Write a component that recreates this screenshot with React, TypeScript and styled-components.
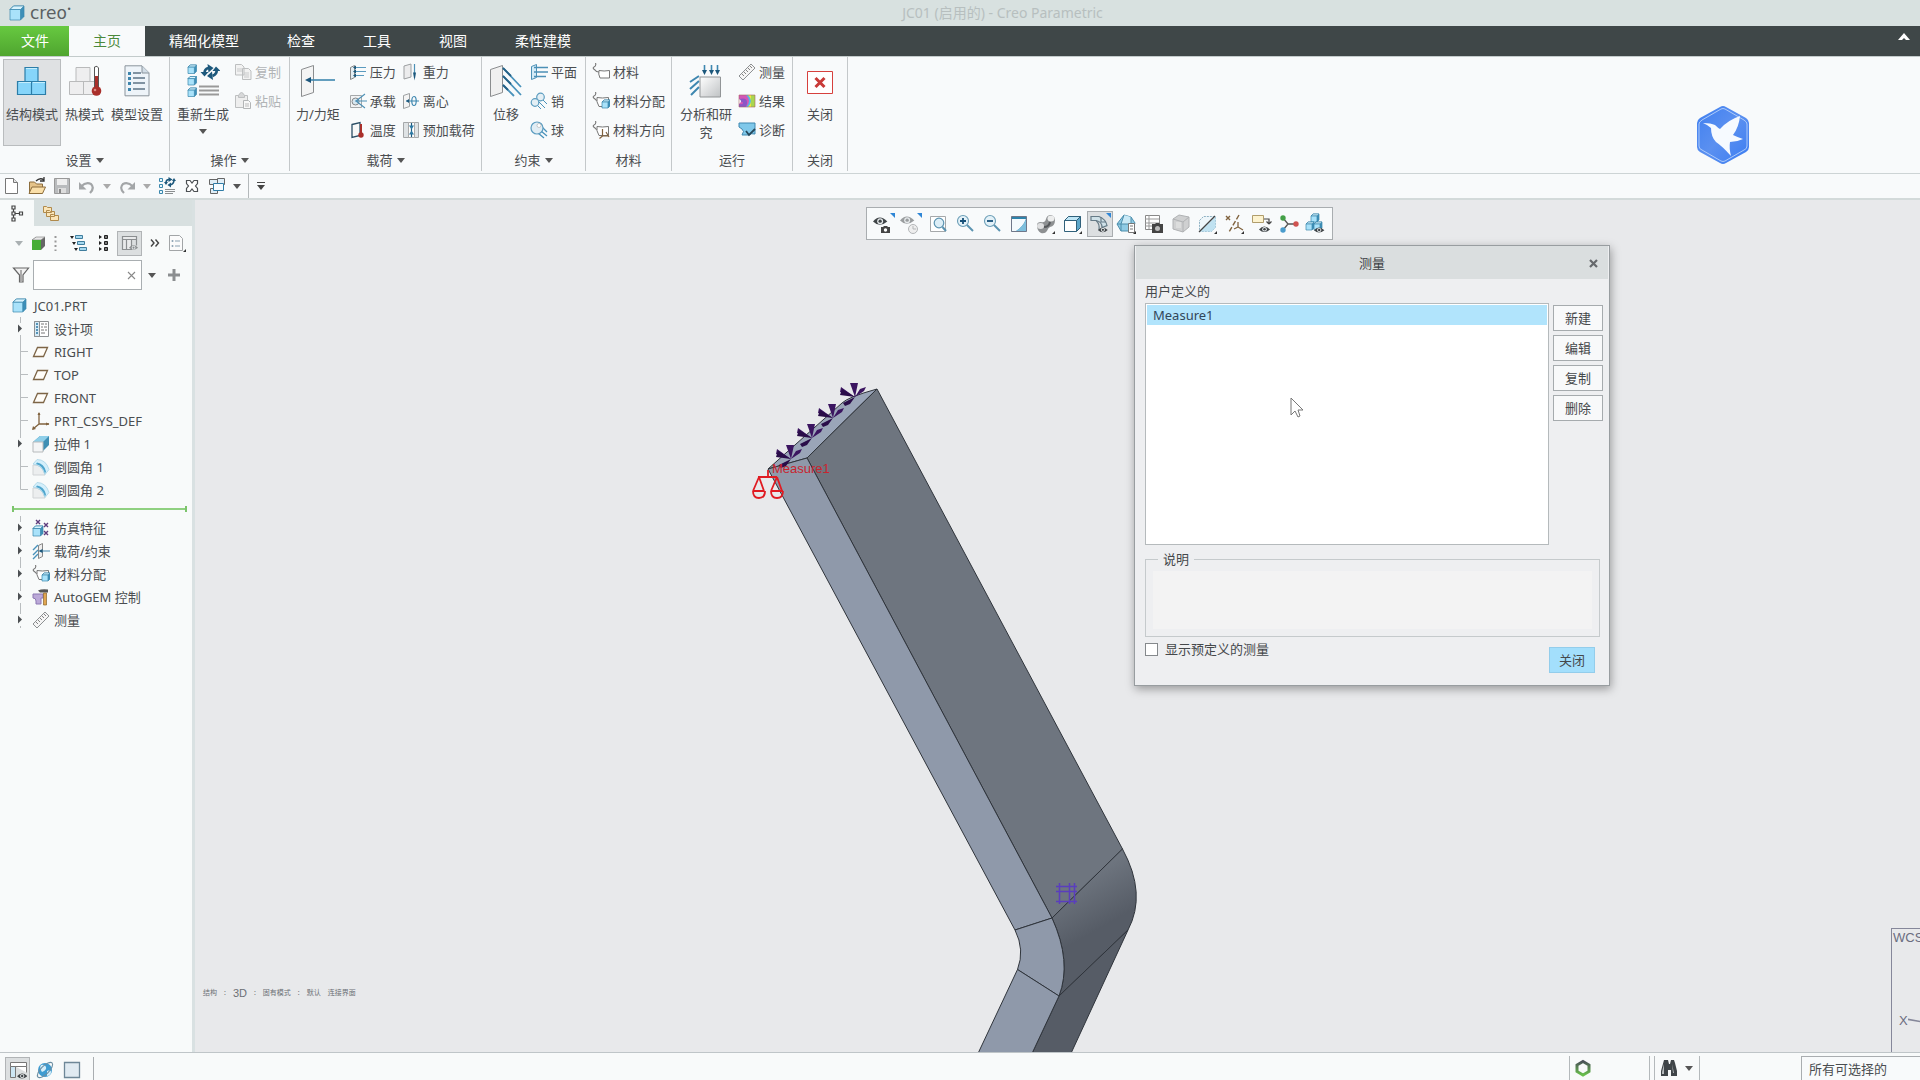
import React from 'react';
import styled, { createGlobalStyle } from 'styled-components';

const GlobalStyle = createGlobalStyle`
  *, *::before, *::after { box-sizing: border-box; }
  body {
    margin: 0;
    background: #f8fafb;
    color: #4a4d50;
    font: 13px/18px "Noto Sans", "Noto Sans CJK SC", sans-serif;
  }
  button, input, select, textarea { font: inherit; color: inherit; }
  button { background: none; border: 0; padding: 0; white-space: nowrap; }
  svg { display: block; flex: none; }
`;

/* ---------- icons ---------- */

type IconProps = { w?: number; h?: number; box?: string; children: React.ReactNode };
const Svg = ({ w = 18, h = w, box, children }: IconProps) => (
  <svg width={w} height={h} viewBox={box ?? `0 0 ${w} ${h}`} fill="none" aria-hidden="true">{children}</svg>
);

const Caret = ({ color = '#555' }: { color?: string }) => (
  <Svg w={8} h={5}><path d="M0 0h8L4 5z" fill={color} /></Svg>
);

const cube = (x: number, y: number, s: number, front = '#a9e2fa', side = '#3d8fb8') => (
  <g key={`${x}-${y}`} stroke="#3a87ac" strokeWidth=".7">
    <path d={`M${x} ${y + s * 0.25}l${s * 0.25} ${-s * 0.25}h${s * 0.75}v${s * 0.75}l${-s * 0.25} ${s * 0.25}z`} fill={side} />
    <path d={`M${x} ${y + s * 0.25}l${s * 0.25} ${-s * 0.25}h${s * 0.75}l${-s * 0.25} ${s * 0.25}z`} fill="#d8f3fd" />
    <path d={`M${x} ${y + s * 0.25}h${s * 0.75}v${s * 0.75}h${-s * 0.75}z`} fill={front} />
  </g>
);

const eye = (x: number, y: number, k = 1, c = '#3f4447') => (
  <g transform={`translate(${x} ${y}) scale(${k})`}>
    <path d="M0 4Q6-3 13 4Q6 10 0 4z" fill={c} />
    <circle cx="6.5" cy="3.8" r="2.7" fill="#e6eaec" />
    <circle cx="6.5" cy="3.8" r="1.5" fill={c} />
  </g>
);

const corner = <path d="M20 18v3h-3z" fill="#333" />;
const blueFlag = <path d="M17 0h5v5z" fill="#2f86d6" />;
const hook = <path d="M3.500 0q1 3-1.500 4-2 1 1 3 1 2 4 2" stroke="#777" strokeWidth="1.100" />;

const art = {
  structure: <Svg w={32}><g fill="#86d5fa" stroke="#2c7da8" strokeWidth="1.2"><path d="M9 2.500h13v14H9zM1.500 16.500h14v13h-14zM15.500 16.500h14v13h-14z" /></g><path d="M10 3.500h11M3 17.500h12M17 17.500h12" stroke="#c5eefd" /></Svg>,
  thermal: <Svg w={34} h={32}><g fill="#eeeeef" stroke="#b9babb"><path d="M8 2.500h14v14H8zM1.500 16.500h14v13h-14zM15.500 16.500h12v13h-12z" /></g><path d="M26.500 2q3-2 4 1v20h-4z" fill="#fff" stroke="#555" /><path d="M27 11h3v13h-3z" fill="#a92f2a" /><circle cx="28.500" cy="26" r="4.800" fill="#a92f2a" /><circle cx="27" cy="25" r="1.300" fill="#dd8a84" /></Svg>,
  model: <Svg w={28} h={32}><path d="M2 .8h17l7 7v23H2z" fill="#eef4f9" stroke="#8a949c" /><path d="M19 1v7h7" fill="#d2dde6" stroke="#8a949c" /><path d="M10 8h8M10 13h12M10 18h12M10 24h12" stroke="#5d7385" strokeWidth="1.400" /><path d="M5 7h3v3H5zM5 12h3v3H5zM5 17h3v3H5zM5 23h3v3H5z" fill="#4086ad" /></Svg>,
  regen: <Svg w={34} h={34}>{cube(2, 1, 8.5)}{cube(2, 12.5, 8.5)}{cube(2, 24, 8.5)}<g fill="none" stroke="#1d587c" strokeWidth="2.600"><path d="M18.500 9q0-4 4-5" /><path d="M30.500 5q1 5-4 7" /></g><path d="M21.500 0l6 4-5 4.500zM27 16l-6-4 5-4.500zM14.500 8h8l-4 4.500zM26.500 7h8l-4.500-4.500z" fill="#1d587c" /><path d="M13 22.500h20M13 26.500h20M13 30.500h20" stroke="#999" strokeWidth="1.800" /></Svg>,
  copy: <Svg><g fill="#f2f2f2" stroke="#bdbfc0"><path d="M1.500 1.500h6l2.500 2.500v8H1.500zM8.500 5.500h6L17 8v8.500H8.500z" /></g><path d="M3 6h5M3 8h5M10 10h5M10 12h5M10 14h5" stroke="#c9cacb" /></Svg>,
  paste: <Svg><path d="M1.500 3.500h12v12h-12z" fill="#eee" stroke="#bdbfc0" /><path d="M4.500 3.500q3-6 6 0v2h-6z" fill="#d7d8d9" stroke="#bdbfc0" /><path d="M9.500 8.500h5l2 2v6h-7z" fill="#f8f8f8" stroke="#b3b5b6" /><path d="M11 12h4M11 14h4" stroke="#bbb" /></Svg>,
  force: <Svg w={36} h={34}><path d="M1.500 5.500l12-4v27l-12 4z" fill="#f4f4f4" stroke="#8b8d8f" /><path d="M7 16h28" stroke="#3e87b0" strokeWidth="1.600" /><path d="M5 16l6-3v6z" fill="#1c567c" /></Svg>,
  pressure: <Svg><path d="M1.500 4.500l4-2v12l-4 2z" fill="#e4eef4" stroke="#888" /><path d="M5 4.500h12M5 8.500h12M5 12.500h10" stroke="#5a9abf" strokeWidth="1.100" /><path d="M4 4.500l3-2v4zM4 8.500l3-2v4zM4 12.500l3-2v4z" fill="#1d587c" /></Svg>,
  bearing: <Svg><path d="M1.500 3.500h11v12h-11z" fill="#f2f3f4" stroke="#a5a8aa" /><circle cx="6.500" cy="9.500" r="3.500" fill="#d7e7f0" stroke="#888" /><path d="M16 2L7 9l9 7M6 9h12" stroke="#4c90b6" strokeWidth="1.100" /></Svg>,
  temperature: <Svg><path d="M3 3.500l8-2v13l-8 2z" fill="#f7f8f8" stroke="#2b4e65" strokeWidth="1.300" /><path d="M11 3h2v10h-2z" fill="#a92f2a" /><circle cx="12" cy="14" r="2.700" fill="#a92f2a" /></Svg>,
  gravity: <Svg><path d="M2 3l7-2v13l-7 2z" fill="#ececed" stroke="#9da0a2" /><path d="M12.500 1v14" stroke="#4c90b6" strokeWidth="1.200" /><path d="M12.500 17.500l-1.500-8h3z" fill="#1d587c" /></Svg>,
  centrifugal: <Svg><path d="M1.500 3.500l6-2v13l-6 2z" fill="#f4f4f4" stroke="#9da0a2" /><path d="M4 9h13" stroke="#4c90b6" strokeWidth="1.100" /><ellipse cx="12" cy="9" rx="2.200" ry="4.500" stroke="#3e87b0" strokeWidth="1.200" /><path d="M4 9l3-2v4z" fill="#1d587c" /></Svg>,
  preload: <Svg><path d="M1.500 1.500h15v15h-15z" fill="#dfe3e5" stroke="#a5a8aa" /><path d="M6.500 1.500h6v15h-6z" fill="#fff" stroke="#aaa" /><path d="M9.500 2v14" stroke="#1d587c" strokeWidth="1.200" /><path d="M7 4.500h5l-2.500 4zM7 13.500h5l-2.500-4z" fill="#2c78a3" /></Svg>,
  displacement: <Svg w={34} h={34}><path d="M1.500 5.500l12-4v27l-12 4z" fill="#f0f0f0" stroke="#8b8d8f" /><path d="M14 4l18 19M14 12l18 19M14 21l11 11" stroke="#4992bb" strokeWidth="1.800" /><path d="M14 4l8 8M14 12l8 8M14 21l5 5" stroke="#256186" strokeWidth="1.800" /></Svg>,
  planar: <Svg><path d="M1.500 3.500l5-2v13l-5 2z" fill="#d4ebf7" stroke="#4c90b6" /><path d="M4 4.500h14M4 9h14M4 13.500h12" stroke="#4c90b6" strokeWidth="1.300" /></Svg>,
  pin: <Svg><path d="M9 10l6 6M12 7l5 5M6 12l5 5" stroke="#4992bb" /><circle cx="10.500" cy="5" r="3.800" fill="#e4eff5" stroke="#5d9dc0" strokeWidth="1.200" /><circle cx="5" cy="10.500" r="3.800" fill="#e4eff5" stroke="#5d9dc0" strokeWidth="1.200" /></Svg>,
  ball: <Svg><path d="M8 12l6 5M11 10l6 5M12 6l5 5" stroke="#4992bb" strokeWidth="1.300" /><circle cx="7" cy="7" r="6" fill="#e1edf4" stroke="#5d9dc0" strokeWidth="1.200" /><circle cx="9" cy="4.500" r="2" fill="#fff" stroke="#aaa" strokeWidth=".6" /></Svg>,
  material: <Svg>{hook}<path d="M7 7.500q5 1 10.500 0v7.500H8q-2-4-1-7.500z" fill="#fff" stroke="#777" /></Svg>,
  assign: <Svg>{hook}<path d="M5 5.500q5 1 11.500 0v9H7q-3-5-2-9z" fill="#fff" stroke="#777" />{cube(10, 8, 8)}</Svg>,
  orient: <Svg>{hook}<path d="M5 5.500q5 1 11.500 0v9H7q-3-5-2-9z" fill="#fff" stroke="#777" /><path d="M10.500 8v7h6M10.500 15l-3 2.500M14 11l3 5" stroke="#80613d" strokeWidth="1.200" /></Svg>,
  analysis: <Svg w={34} h={34}><g stroke="#3e87b0" strokeWidth="1.600"><path d="M15.500 1v6M22.500 1v6M28.500 1v6" /><path d="M1 18l9-6M1 25l9-8M2 31l8-8" strokeWidth="2" /></g><path d="M13 6h5l-2.500 5zM20 6h5l-2.500 5zM26 6h5l-2.500 5z" fill="#1d587c" /><path d="M11 13h20.500v20H11z" fill="url(#steel)" stroke="#929597" /><defs><linearGradient id="steel" x1="0" y1="0" x2="1" y2="1"><stop stopColor="#fff" /><stop offset="1" stopColor="#bfc2c4" /></linearGradient></defs></Svg>,
  measure: <Svg><path d="M1 13L13 1l4 4L5 17z" fill="#f5f5f5" stroke="#8d9092" /><path d="M4 11l2 2M6 9l2 2M8 7l2 2M10 5l2 2M12 3l2 2" stroke="#777" strokeWidth=".9" /></Svg>,
  result: <Svg><path d="M1 3h16v12H1z" fill="#f3e73a" /><path d="M13 3h4v12h-4z" fill="#a9d64f" /><path d="M1 3h9q6 6 0 12H1z" fill="#54b9e6" /><path d="M1 3h7q6 6 0 12H1z" fill="#d356b6" /><path d="M1 7q8-2 8 3t-2 5H1v-3q4 1 4-1T1 10z" fill="#8b55c6" /><path d="M1 7q4 2 0 5z" fill="#fff" /><path d="M1 3h16v12H1z" stroke="#a66" strokeWidth=".6" /></Svg>,
  diagnose: <Svg><path d="M1 2h16v11q-4-1-6 1H4q3-4 0-6L1 6z" fill="#7fc8ea" stroke="#3e87b0" /><path d="M8 10l3 4 6-6" stroke="#27485b" strokeWidth="1.800" /></Svg>,
  exit: <Svg w={28} h={34}><path d="M1.500 7.500h25v22h-25z" fill="#fff" stroke="#d6403d" /><path d="M9.500 14l9 9M18.500 14l-9 9" stroke="#c93a38" strokeWidth="3" /></Svg>,

  newFile: <Svg><path d="M2.500 1.500h8l4 4v11h-12z" fill="#fff" stroke="#777" /><path d="M10.500 1.500v4h4" stroke="#777" fill="#e5e5e5" /></Svg>,
  open: <Svg><path d="M1.500 5h5l2 2h6v9H1.500z" fill="#e5c389" stroke="#8c6d3c" /><path d="M4 10h13.500l-3 6.500H1z" fill="#fadfa9" stroke="#8c6d3c" /><path d="M8 4q4-4 8-1M16 0v4h-4" stroke="#333" strokeWidth="1.300" /></Svg>,
  save: <Svg><path d="M1.500 1.500h15v15h-15z" fill="#b9bbbd" stroke="#999" /><path d="M4 2h10v6H4z" fill="#eee" /><path d="M5 11h8v5H5z" fill="#ddd" /><path d="M6 12h2v4H6z" fill="#888" /></Svg>,
  undo: <Svg><path d="M3 9.500q5-5 10-2.500 4 4-1 9" stroke="#a3a6a8" strokeWidth="2.200" /><path d="M1 5v7.500h7.500z" fill="#a3a6a8" /></Svg>,
  redo: <Svg><path d="M15 9.500q-5-5-10-2.500-4 4 1 9" stroke="#a3a6a8" strokeWidth="2.200" /><path d="M17 5v7.500H9.500z" fill="#a3a6a8" /></Svg>,
  regenSmall: <Svg><g stroke="#3a87ac" fill="#e9f6fc"><path d="M1.500 1.500h3v3h-3zM1.500 7.500h3v3h-3zM1.500 13.500h3v3h-3z" /></g><path d="M8 6q0-3.500 3-3.500M16 3q0 4-4 5" stroke="#1d587c" strokeWidth="1.600" /><path d="M10.500 0l4 2.500-4 2.500zM13 10.500L9.500 8 13 5.500zM6 5h4L8 8zM14 4h4l-2-3z" fill="#1d587c" /><path d="M7 12.500h10M7 14.500h10M7 16.500h8" stroke="#8b8e90" /></Svg>,
  closeWin: <Svg><path d="M3.500 3.500h3.500L9 6l2-2.500h3.500v3L12.500 9l2 2.500v3H11L9 12l-2 2.500H3.500v-3L5.500 9l-2-2.500z" fill="#fff" stroke="#4c5053" strokeWidth="1.200" /></Svg>,
  windows: <Svg><g stroke="#666" fill="#dfeef7"><path d="M1.500 2.500h8v5h-8zM9.500 1.500h7v6h-7zM2.500 11.500h7v5h-7z" /><path d="M5.500 6.500h10v7h-10z" stroke="#2f7ca6" fill="#f4fbff" /></g></Svg>,

  treeTab: <Svg w={14} h={18}><g stroke="#444" strokeWidth="1.200"><path d="M2 2h3v3H2zM2 8h3v3H2zM2 14h3v3H2zM9.500 8h3v3h-3z" /><path d="M5 9.500h4M3.500 5v3M3.500 11v3" /></g></Svg>,
  folders: <Svg><g fill="#fbe5b8" stroke="#b08a4c"><path d="M1.500 2.500h3l1 1h4v5h-8zM4.500 6.500h3l1 1h4v5h-8zM8.500 10.500h3l1 1h4v5h-8z" /></g></Svg>,
  greenCube: <Svg w={15} h={15}><path d="M1 4l4-3h9v9l-4 4z" fill="#666" /><path d="M1 4l4-3h9l-4 3z" fill="#e8e8e8" stroke="#777" strokeWidth=".6" /><path d="M1 4h9v10H1z" fill="#46ad35" /></Svg>,
  dots: <Svg w={3} h={16}><path d="M1.500 1v15" stroke="#999" strokeWidth="2" strokeDasharray="2 2.500" /></Svg>,
  collapse: <Svg><g fill="#a5d8ef" stroke="#3f7d9d"><path d="M6.500 1.500h7v3h-7zM8.500 7.500h7v3h-7zM10.500 13.500h7v3h-7z" /></g><path d="M1 2h4L3 5zM3 8h4l-2 3zM5 14h4l-2 3z" fill="#222" /></Svg>,
  expand: <Svg w={11} h={18}><g fill="#777" stroke="#222"><path d="M6.500 1.500h3v3h-3zM6.500 7.500h3v3h-3zM6.500 13.500h3v3h-3z" /></g><path d="M1 1l3 2-3 2zM1 7l3 2-3 2zM1 13l3 2-3 2z" fill="#222" /></Svg>,
  columns: <Svg><path d="M1.500 2.500h14v3h-14zM1.500 5.500h4v10h-4zM5.500 5.500h5v10h-5zM15.500 5.500v6" stroke="#8b8e90" strokeWidth="1.200" fill="#e9eaeb" />{eye(8, 11, 0.7, '#8b8e90')}</Svg>,
  chevrons: <Svg w={10} h={10}><path d="M1 1.500L4 5 1 8.500M5.500 1.500l3 3.500-3 3.500" stroke="#444" strokeWidth="1.400" /></Svg>,
  docMenu: <Svg><path d="M1.500 1.500h10l3 3v12h-13z" fill="#fbfbfb" stroke="#a2a5a7" /><path d="M7 7h5M7 12h5" stroke="#8aa1b1" /><circle cx="4.500" cy="7" r="1" fill="#8aa1b1" /><circle cx="4.500" cy="12" r="1" fill="#8aa1b1" /><path d="M18 15v3h-3z" fill="#333" /></Svg>,
  funnel: <Svg><path d="M1.500 2h15L11 9v7H7.500V9z" fill="#f2f2f2" stroke="#666" strokeWidth="1.200" /><path d="M9 4v11" stroke="#666" /></Svg>,
  clear: <Svg w={9} h={9}><path d="M1 1l7 7M8 1L1 8" stroke="#888" strokeWidth="1.100" /></Svg>,
  plus: <Svg w={12} h={12}><path d="M6 0v12M0 6h12" stroke="#8b8e90" strokeWidth="3" /></Svg>,

  part: <Svg w={15} h={15}>{cube(1, 1, 13)}</Svg>,
  design: <Svg><path d="M2.500 1.500h14v15h-14z" fill="#fff" stroke="#8d9092" /><path d="M2.500 1.500h5v15h-5z" fill="#d6eaf5" stroke="#8d9092" /><path d="M9 4h3M13 4h2M9 7h2M12 7h3M9 10h3M13 10h2M9 13h4" stroke="#777" /><path d="M4 4h2M4 7h2M4 10h2M4 13h2" stroke="#2c78a3" strokeWidth="1.500" /></Svg>,
  plane: <Svg><path d="M1.500 13.500l4-9h10l-4 9z" fill="#fffdf8" stroke="#7d6546" strokeWidth="1.300" /></Svg>,
  csys: <Svg><path d="M7 1v11h10M7 12l-6 5" stroke="#80633f" strokeWidth="1.300" /><path d="M5.500 3L7 0l1.500 3zM14 10.500l3.500 1.500-3.500 1.500zM1 14l-1 4 4-1z" fill="#80633f" /></Svg>,
  extrude: <Svg><path d="M1 7l7-6h9v9l-6 6z" fill="#3f8fb4" /><path d="M1 7l7-6h9l-6 6z" fill="#8fcfe9" /><path d="M1 7h10v10H1z" fill="#f4f5f6" stroke="#b7babc" /></Svg>,
  round: <Svg><path d="M1 7q9-1 12 10H1z" fill="#eceeef" stroke="#d0d3d5" /><path d="M5 1.500q9 0 12 10l-4 5Q10 7 1 6z" fill="#d3effb" stroke="#a8d3e6" strokeWidth=".8" /><path d="M5 4.500q7 1 9 9l-1 2Q11 8 4 6z" fill="#4ea5cd" /></Svg>,
  simFeature: <Svg>{cube(1, 7, 10)}<path d="M4 1l4 4M8 1L4 5M12 4l4 4M16 4l-4 4M12 12l4 4M16 12l-4 4" stroke="#5e3c7c" strokeWidth="1.400" /></Svg>,
  loadConstraint: <Svg><path d="M6.500 3.500l4-2v13l-4 2z" fill="#eee" stroke="#888" /><path d="M1 8l5-5M1 13l5-5M1 17l5-5" stroke="#4992bb" strokeWidth="1.400" /><path d="M8 9h10" stroke="#3e87b0" /><path d="M6.500 9l4-2v4z" fill="#1d587c" /></Svg>,
  autogem: <Svg><path d="M1 6h10v4H9v6H4v-3q0-3-3-3z" fill="#bba9d8" stroke="#8d78b3" /><path d="M6 2.500q4-2 10-1v3H8z" fill="#555" /><path d="M11.500 5h3v12h-3z" fill="#e0a651" stroke="#8c6429" strokeWidth=".7" /></Svg>,

  eyeCam: <Svg w={22}>{eye(0, 4, 1.1)}<path d="M8 14h2l1-1h3l1 1h2v6H8z" fill="#444" /><circle cx="12.500" cy="17" r="1.700" fill="#fff" />{blueFlag}</Svg>,
  eyeOff: <Svg w={22}>{eye(0, 3, 1.1, '#9a9d9f')}<circle cx="13" cy="16" r="4.500" fill="#eee" stroke="#b3b6b8" /><path d="M13 13v3h3" stroke="#b3b6b8" />{blueFlag}</Svg>,
  refit: <Svg w={22}><path d="M3.500 3.500h15v15h-15z" fill="#fff" stroke="#a5a8aa" /><circle cx="12" cy="10" r="4.800" fill="#dceef7" stroke="#5b93b0" strokeWidth="1.200" /><path d="M15.500 14l3.500 4" stroke="#5b93b0" strokeWidth="2" /></Svg>,
  zoomIn: <Svg w={22}><circle cx="9" cy="8" r="5.500" fill="#e3f1f8" stroke="#6a9db6" strokeWidth="1.100" /><path d="M6 8h6M9 5v6" stroke="#164f78" strokeWidth="1.800" /><path d="M13 12l6 6" stroke="#5b93b0" strokeWidth="2" /></Svg>,
  zoomOut: <Svg w={22}><circle cx="9" cy="8" r="5.500" fill="#e3f1f8" stroke="#6a9db6" strokeWidth="1.100" /><path d="M6 8h6" stroke="#164f78" strokeWidth="1.800" /><path d="M13 12l6 6" stroke="#5b93b0" strokeWidth="2" /></Svg>,
  repaint: <Svg w={22}><path d="M3.500 3.500h15v15h-15z" fill="#2f83ab" stroke="#667" strokeWidth=".8" /><path d="M4 6h14q-3 8-10 12H4z" fill="#f4fafd" /><path d="M18 6v12H8q7-4 10-12z" fill="#7dbfdd" /></Svg>,
  shading: <Svg w={22}><path d="M2 12q0-3 4-3 4 1 5-3 1-4 5-4 4 1 4 5 0 6-5 7-2 1-3 4-2 3-6 2-4-2-4-8z" fill="#8d9092" /><ellipse cx="16" cy="5.500" rx="3.500" ry="3" fill="#eceded" /><ellipse cx="5.500" cy="13" rx="3.500" ry="3" fill="#dedfe0" /><path d="M9 14q5 0 6-5" stroke="#55585b" strokeWidth="2" />{corner}</Svg>,
  display: <Svg w={22}><path d="M2.500 7.500l4-4h12v11l-4 4z" fill="#5da7ca" stroke="#30617b" /><path d="M2.500 7.500l4-4h12l-4 4z" fill="#bfe6f6" stroke="#30617b" /><path d="M2.500 7.500h12v11h-12z" fill="#fff" stroke="#30617b" />{corner}</Svg>,
  annotation: <Svg w={22}><path d="M2 3.500h8q7 3 8 9l-5 2q0-6-6-7H2z" fill="#cfe1e8" stroke="#667b87" strokeWidth="1.200" /><path d="M7 7.500q4 3 3 10M12 4v5l5 0" stroke="#667b87" strokeWidth="1.200" />{eye(9, 14, 0.75)}{blueFlag}</Svg>,
  views: <Svg w={22}><path d="M8 2l7 2 4 6-3 8H5l-4-7z" fill="#8fcbe5" stroke="#4d8eac" /><path d="M8 2L5 11h10l0-7M5 11H1M5 11v7" stroke="#4d8eac" fill="#c9e9f6" /><path d="M12.500 10.500h6v9h-6z" fill="#fff" stroke="#777" /><path d="M14 13h3M14 16h3" stroke="#777" />{corner}</Svg>,
  viewMgr: <Svg w={22}><path d="M2.500 2.500h14v14h-14z" fill="#fff" stroke="#888" /><path d="M2 6h14M2 10h14M2 13h14M6 2v14" stroke="#999" /><path d="M9 11h3l1-1h3l1 1h3v9H9z" fill="#444" /><circle cx="14.500" cy="15.500" r="2.500" fill="#bbb" /></Svg>,
  grayCube: <Svg w={22}><path d="M3 6l6-4 10 2v10l-6 5-10-3z" fill="#cfd0d1" stroke="#b0b2b4" /><path d="M3 6l10 3 6-5M13 9v10" stroke="#b0b2b4" /><path d="M6 9h5v6H6z" fill="#dcdddd" /></Svg>,
  section: <Svg w={22}><path d="M2.500 7.500l4-4h12v11l-4 4h-12z" fill="#eef6fa" stroke="#8fb2c4" strokeDasharray="2 1" /><path d="M2.500 18.500l12-11 4-4v11l-4 4z" fill="#c0e2f1" /><path d="M2 19L18 3" stroke="#444" strokeWidth="1.300" />{corner}</Svg>,
  datums: <Svg w={22}><path d="M2 3l4 4M6 3L2 7" stroke="#80633f" strokeWidth="1.400" /><path d="M15 2L5 19" stroke="#80633f" strokeWidth="1.400" strokeDasharray="5 2" /><path d="M14 9v5l5 3M14 14l-4 2" stroke="#80633f" strokeWidth="1.300" />{corner}</Svg>,
  notes: <Svg w={22}><path d="M1.500 2.500h11v7h-11z" fill="#fdf3cf" stroke="#b09d6c" /><path d="M13 6h5v5M18 11l-2.500-2.500M18 11l2.500-2.500" stroke="#444" strokeWidth="1.200" />{eye(8, 13, 0.85)}</Svg>,
  spin: <Svg w={22}><path d="M5 5l5 6M10 11h8M10 11l-5 6" stroke="#555" strokeWidth="1.300" /><circle cx="5" cy="5" r="2.700" fill="#43a047" /><circle cx="18" cy="11" r="2.700" fill="#cf5350" /><circle cx="5" cy="17" r="2.700" fill="#4a9ccc" /></Svg>,
  simDisplay: <Svg w={22}>{cube(6, 1, 8)}{cube(1, 9, 8)}{cube(9, 9, 8)}{eye(9, 14, 0.8)}</Svg>,

  panel: <Svg><path d="M1.500 1.500h16v4h-16z" fill="#fff" stroke="#777" /><path d="M1.500 5.500h5v11h-5z" fill="#cde6f3" stroke="#777" /><path d="M6.500 5.500h11v6" stroke="#777" fill="#fff" />{eye(8, 12, 0.8)}</Svg>,
  globe: <Svg><circle cx="9" cy="9" r="7" fill="#3f9cd1" /><path d="M5 4q4-1 5 2t-4 5q-3-4-1-7zM11 10q4-2 4 1t-4 4z" fill="#d5eefa" /><ellipse cx="9" cy="9" rx="10" ry="4" transform="rotate(-45 9 9)" stroke="#6d8ea2" strokeWidth="1.100" /></Svg>,
  blank: <Svg><path d="M1.500 1.500h15v15h-15z" fill="#e0eaf1" stroke="#6e8797" strokeWidth="1.300" /></Svg>,
  hexagon: <Svg w={16} h={18}><path d="M8 2.500l6 3.500v6.500L8 16l-6-3.500V6z" stroke="url(#hex)" strokeWidth="3" /><defs><linearGradient id="hex" x1="0" y1="0" x2="0" y2="1"><stop stopColor="#4b5358" /><stop offset="1" stopColor="#69c04c" /></linearGradient></defs></Svg>,
  binoculars: <Svg><path d="M4 1h4l1 4h1l1-4h3l1 3 2 8v5h-6v-6H8v6H1v-5z" fill="#3f4447" /><path d="M4 5l-2 8v2h2zM12 5l1 9h1z" fill="#b5b9bb" /></Svg>,
};
type Art = keyof typeof art;

/* ---------- title and menu ---------- */

const Page = styled.div`
  height: 100vh;
  min-height: 720px;
  display: flex;
  flex-direction: column;
  overflow: hidden;
`;

const TitleBar = styled.header`
  display: flex;
  align-items: center;
  flex: none;
  height: 26px;
  padding-left: 9px;
  background: #d8e1e0;
`;

const Brand = styled.div`
  display: flex;
  align-items: center;
  gap: 5px;
  width: 76px;
  color: #5a6062;
  font: 17px/24px "DejaVu Sans", sans-serif;
  sup { font-size: 8px; line-height: 8px; }
`;

const WindowTitle = styled.h1`
  flex: 1;
  margin: 0;
  text-align: center;
  font-size: 14px;
  font-weight: 400;
  color: #b7bfbf;
`;

const MenuBar = styled.nav`
  display: flex;
  flex: none;
  height: 31px;
  background: #3f4748;
  border-bottom: 1px solid #c3cbcb;
`;

const MenuTab = styled.button<{ $kind?: 'file' | 'active' }>`
  padding: ${p => (p.$kind === 'file' ? '0 20px 0 21px' : '0 24px')};
  font-size: 14px;
  color: ${p => (p.$kind === 'active' ? '#4c8a3c' : '#fff')};
  background: ${p =>
    p.$kind === 'file' ? 'linear-gradient(#67c940, #4fa52f)' : p.$kind === 'active' ? '#f8fafb' : 'none'};
`;

const MinimizeRibbon = styled.button`
  align-self: flex-start;
  margin: 7px 10px 0 auto;
`;

/* ---------- ribbon ---------- */

const Ribbon = styled.section`
  display: flex;
  flex: none;
  align-items: stretch;
  height: 117px;
  padding-bottom: 2px;
  border-bottom: 1px solid #cdd4d5;
`;

const Group = styled.div<{ $width: number }>`
  display: flex;
  flex-direction: column;
  min-width: ${p => p.$width}px;
  border-right: 1px solid #c4c8ca;
`;

const GroupBody = styled.div<{ $gap?: number; $pad?: number; $center?: boolean }>`
  display: flex;
  justify-content: ${p => (p.$center ? 'center' : 'flex-start')};
  gap: ${p => p.$gap ?? 1}px;
  height: 89px;
  padding-left: ${p => p.$pad ?? 0}px;
`;

const GroupLabel = styled.button`
  display: flex;
  align-items: center;
  justify-content: center;
  gap: 4px;
  margin-top: 5px;
  height: 18px;
`;

const BigButton = styled.button<{ $on?: boolean; $wrap?: boolean }>`
  display: flex;
  flex-direction: column;
  align-items: center;
  min-width: 38px;
  max-width: ${p => (p.$wrap ? '60px' : 'none')};
  height: 87px;
  margin-top: 2px;
  padding: 4px 2px 0;
  border: 1px solid ${p => (p.$on ? '#b9bcbe' : 'transparent')};
  background: ${p => (p.$on ? '#dfe1e3' : 'none')};
  white-space: ${p => (p.$wrap ? 'normal' : 'nowrap')};
`;

const BigArt = styled.span`
  display: flex;
  align-items: center;
  height: 34px;
  margin-bottom: 7px;
`;

const CaretSlot = styled.span`
  margin-top: 6px;
`;

const SmallColumn = styled.div`
  display: grid;
  grid-template-rows: repeat(3, 29px);
  justify-items: start;
  height: 87px;
`;

const SmallButton = styled.button`
  display: flex;
  align-items: center;
  gap: 3px;
  &:disabled { color: #b1b4b6; }
`;

const Big = ({ icon, label, on, wrap, menu }: { icon: Art; label: string; on?: boolean; wrap?: boolean; menu?: boolean }) => (
  <BigButton $on={on} $wrap={wrap}>
    <BigArt>{art[icon]}</BigArt>
    {label}
    {menu && <CaretSlot><Caret /></CaretSlot>}
  </BigButton>
);

const Column = ({ items, disabled }: { items: [Art, string][]; disabled?: boolean }) => (
  <SmallColumn>
    {items.map(([icon, label]) => (
      <SmallButton key={label} disabled={disabled}>{art[icon]}{label}</SmallButton>
    ))}
  </SmallColumn>
);

const BirdBadge = styled.div`
  align-self: flex-end;
  margin: 0 170px 6px auto;
`;

const QuickBar = styled.div`
  display: flex;
  align-items: center;
  flex: none;
  gap: 7px;
  height: 26px;
  padding-left: 3px;
  border-bottom: 2px solid #d3dada;
`;

const Rule = styled.span`
  align-self: stretch;
  width: 1px;
  background: #b4b9bb;
`;

/* ---------- model tree ---------- */

const Workspace = styled.main`
  display: flex;
  flex: 1;
  min-height: 0;
`;

const Sidebar = styled.aside`
  flex: none;
  width: 195px;
  background: #f8fafa;
  border-right: 3px solid #d9e1e2;
`;

const SideTabs = styled.div`
  display: flex;
  height: 26px;
  background: #d8e0e0;
`;

const SideTab = styled.button<{ $on?: boolean }>`
  display: grid;
  place-items: center;
  width: 34px;
  background: ${p => (p.$on ? '#f8fafa' : 'none')};
`;

const TreeTools = styled.div`
  display: flex;
  align-items: center;
  gap: 8px;
  height: 34px;
  padding: 0 5px 0 15px;
`;

const ToggleTool = styled.button<{ $on?: boolean }>`
  display: grid;
  place-items: center;
  width: 25px;
  height: 25px;
  border: 1px solid ${p => (p.$on ? '#b1b4b6' : 'transparent')};
  background: ${p => (p.$on ? '#dcdfe0' : 'none')};
`;

const FilterRow = styled.div`
  display: flex;
  align-items: center;
  height: 30px;
  padding: 0 12px;
`;

const FilterBox = styled.div`
  display: flex;
  align-items: center;
  width: 109px;
  height: 30px;
  margin: 0 6px 0 3px;
  padding-right: 5px;
  border: 1px solid #a9aeb1;
  background: #fff;
  input { flex: 1; min-width: 0; height: 26px; border: 0; background: none; outline: 0; }
`;

const AddFilter = styled.button`
  margin-left: auto;
`;

const Tree = styled.ul`
  list-style: none;
  margin: 0;
  padding: 4px 0 0;
`;

const TreeRow = styled.li<{ $root?: boolean }>`
  display: flex;
  align-items: center;
  gap: ${p => (p.$root ? 7 : 4)}px;
  height: 23px;
  padding-left: ${p => (p.$root ? 12 : 11)}px;
`;

const InsertHere = styled.li`
  display: grid;
  align-items: center;
  height: 15px;
  padding: 0 5px 0 12px;
`;

const InsertLine = styled.span`
  height: 6px;
  border: solid #7cc46c;
  border-width: 0 2px;
  background: linear-gradient(#8fd080, #8fd080) center / 100% 2px no-repeat;
`;

type Guide = 'arrow' | 'stub' | 'end' | 'loose';
const GuideMark = ({ kind }: { kind: Guide }) => (
  <Svg w={17} h={23}>
    <path
      d={{ arrow: 'M9.500 0v6M9.500 18v5', stub: 'M9.500 0v23M9.500 11.500h8', end: 'M9.500 0v11.500h8', loose: 'M9.500 0v6M9.500 18v2' }[kind]}
      stroke="#b9bdbf"
    />
    {(kind === 'arrow' || kind === 'loose') && <path d="M7 7.500v8l4-4z" fill="#4c4f52" />}
  </Svg>
);

const features: [Guide, Art, string][] = [
  ['arrow', 'design', '设计项'],
  ['stub', 'plane', 'RIGHT'],
  ['stub', 'plane', 'TOP'],
  ['stub', 'plane', 'FRONT'],
  ['stub', 'csys', 'PRT_CSYS_DEF'],
  ['arrow', 'extrude', '拉伸 1'],
  ['stub', 'round', '倒圆角 1'],
  ['end', 'round', '倒圆角 2'],
];
const simulation: [Guide, Art, string][] = [
  ['arrow', 'simFeature', '仿真特征'],
  ['arrow', 'loadConstraint', '载荷/约束'],
  ['arrow', 'assign', '材料分配'],
  ['arrow', 'autogem', 'AutoGEM 控制'],
  ['loose', 'measure', '测量'],
];
const rows = (list: [Guide, Art, string][]) =>
  list.map(([guide, icon, label]) => (
    <TreeRow key={label}><GuideMark kind={guide} />{art[icon]}{label}</TreeRow>
  ));

/* ---------- graphics area ---------- */

const Viewport = styled.section`
  position: relative;
  flex: 1;
  overflow: hidden;
  background: #e8e9eb;
`;

const ModelLayer = styled.div`
  position: absolute;
  inset: 0;
`;

const ViewTools = styled.div`
  position: absolute;
  left: 671px;
  top: 7px;
  display: flex;
  align-items: center;
  gap: 3px;
  height: 33px;
  padding: 0 4px 0 5px;
  border: 1px solid #a9adb0;
  background: #f8fafb;
`;

const ViewTool = styled.button<{ $on?: boolean }>`
  display: grid;
  place-items: center;
  width: 24px;
  height: 24px;
  background: ${p => (p.$on ? '#dcdfe1' : 'none')};
  box-shadow: ${p => (p.$on ? '0 0 0 1px #a9adb0' : 'none')};
`;

const MeasureTag = styled.span`
  position: absolute;
  left: 577px;
  top: 260px;
  font: 13px/18px "Liberation Sans", sans-serif;
  color: #c8242f;
`;

const StatusCaption = styled.p`
  position: absolute;
  left: 8px;
  bottom: 50px;
  display: flex;
  gap: 7px;
  margin: 0;
  font-size: 7px;
  color: #6c7075;
  b { font: 11px/18px "Liberation Sans", sans-serif; }
`;

const WcsBox = styled.div`
  position: absolute;
  right: 0;
  bottom: 0;
  width: 29px;
  height: 124px;
  border: solid #85879a;
  border-width: 1px 0 0 1px;
  padding: 1px 0 0 1px;
  font: 13px/16px "Liberation Sans", sans-serif;
  color: #6b6d80;
`;

const WcsAxis = styled.div`
  display: flex;
  align-items: center;
  margin: 67px 0 0 6px;
`;

const clamp = (x: number, y: number) => (
  <g key={x} transform={`translate(${x} ${y})`} fill="#3b1560">
    <path d="M-5-14h8L0 0zM-15-5l1-5L0 0zM0 0l5-8 6-2-2 4z" />
    <path d="M-12 6l6-3 6-3-5 7-5 2zM0 0l-15-2 2-6z" fill="#2a0d49" />
  </g>
);

const Bracket = () => (
  <svg width="1725" height="852" viewBox="195 200 1725 852" role="img" aria-label="JC01.PRT">
    <defs>
      <linearGradient id="bend" gradientUnits="userSpaceOnUse" x1="1078" y1="880" x2="1104" y2="926">
        <stop stopColor="#6e757f" />
        <stop offset="1" stopColor="#565c66" />
      </linearGradient>
    </defs>
    <g stroke="#2f343b" strokeWidth="1" strokeLinejoin="round">
      <path d="M768 469L842 403Q848 397 877 389L807 458z" fill="#9aa5b8" />
      <path d="M877 389L1122.500 849L1052 918L807 458z" fill="#6e757f" />
      <path d="M768 469L807 458L1052 918L1015 930z" fill="#8f99aa" />
      <path d="M1122.500 849Q1147 894 1128 930L1059 996Q1072 962 1052 918z" fill="url(#bend)" />
      <path d="M1015 930L1052 918Q1072 962 1059 996L1017.500 969.500Q1025 950 1015 930z" fill="#8f99aa" />
      <path d="M1128 930L1059 996L1028 1062H1067z" fill="#565c66" />
      <path d="M1017.500 969.500L1059 996L1028 1062H974z" fill="#8f99aa" />
    </g>
    {clamp(791, 459)}{clamp(812, 438)}{clamp(833, 418)}{clamp(855, 397)}
    <g stroke="#e01b22" strokeWidth="1.800" fill="none">
      <path d="M768 470v6M758 477h19M759 477l-6 14M759 477l5 14M777 477l-6 14M777 477l5 14M753 491h11M771 491h12" />
      <path d="M753 491q0 7 6 7t6-7M771 491q0 7 6 7t6-7" />
    </g>
    <path d="M1056 886.500h21M1056 891.500h21M1056 901.500h21M1059.500 883v21M1069.500 883v21M1074.500 883v21" stroke="#5a3ebd" strokeWidth="1.500" />
  </svg>
);

/* ---------- measure dialog ---------- */

const Dialog = styled.div`
  position: absolute;
  left: 939px;
  top: 45px;
  width: 476px;
  height: 441px;
  background: #eeeff1;
  border: 1px solid #989da0;
  box-shadow: 1px 3px 9px rgba(0, 0, 0, 0.35);
  color: #45484b;
`;

const DialogTitle = styled.div`
  display: flex;
  align-items: center;
  height: 33px;
  margin: 0 1px;
  padding: 1px 10px 0;
  background: #dadedf;
  h2 { flex: 1; margin: 0 0 0 9px; text-align: center; font-size: 13px; font-weight: 400; color: #3c3f42; }
`;

const DialogBody = styled.div`
  padding: 3px 6px 0 10px;
`;

const ListArea = styled.div`
  display: flex;
  gap: 4px;
  margin-top: 3px;
`;

const MeasureList = styled.ul`
  flex: 1;
  height: 242px;
  margin: 0;
  padding: 1px;
  list-style: none;
  background: #fff;
  border: 1px solid #b5babc;
`;

const MeasureItem = styled.li`
  padding: 0 6px;
  line-height: 20px;
  background: #b1e4fc;
  color: #31475a;
`;

const Actions = styled.div`
  display: grid;
  align-content: start;
  gap: 4px;
  padding-top: 2px;
`;

const DialogButton = styled.button<{ $primary?: boolean }>`
  width: ${p => (p.$primary ? 46 : 50)}px;
  height: 26px;
  border: 1px solid ${p => (p.$primary ? '#93cdeb' : '#a6abae')};
  background: ${p => (p.$primary ? '#a3dffc' : '#f8f9fa')};
`;

const Description = styled.fieldset`
  margin: 5px 3px 0 0;
  padding: 3px 7px 7px;
  border: 1px solid #c5cacc;
  legend { margin-left: 5px; padding: 0 5px; }
  textarea { display: block; width: 100%; height: 58px; border: 0; background: #f3f3f3; resize: none; }
`;

const DialogFooter = styled.div`
  display: flex;
  align-items: flex-start;
  justify-content: space-between;
  padding: 3px 8px 0 0;
  label { display: flex; align-items: center; gap: 7px; }
  input {
    appearance: none;
    width: 13px;
    height: 13px;
    margin: 0;
    border: 1px solid #85898c;
    background: #fff;
  }
  ${DialogButton} { margin-top: 7px; }
`;

const Pointer = styled.span`
  position: absolute;
  left: 1095px;
  top: 197px;
`;

/* ---------- status bar ---------- */

const StatusBar = styled.footer`
  display: flex;
  flex: none;
  height: 28px;
  overflow: hidden;
  padding-left: 5px;
  border-top: 1px solid #bfc5c8;
  background: #f8fafa;
`;

const StatusTools = styled.div`
  display: flex;
  gap: 2px;
  height: 24px;
  margin-top: 4px;
  padding-right: 9px;
  border-right: 1px solid #a9adb0;
`;

const StatusCell = styled.div<{ $width: number; $push?: boolean }>`
  display: flex;
  align-items: center;
  gap: 7px;
  width: ${p => p.$width}px;
  margin: 3px 4px 0 ${p => (p.$push ? 'auto' : '0')};
  padding-left: 5px;
  border: solid #b4b9bb;
  border-width: 0 1px;
`;

const Filter = styled.select`
  appearance: none;
  width: 119px;
  height: 26px;
  margin: 3px 0 0 97px;
  padding: 0 7px;
  border: 1px solid #a9adb0;
  border-right: 0;
  border-radius: 0;
  background: #f8fafb;
`;

const viewTools: [Art, string, boolean?][] = [
  ['eyeCam', '显示'], ['eyeOff', '隐藏'], ['refit', '重新调整'], ['zoomIn', '放大'], ['zoomOut', '缩小'],
  ['repaint', '重画'], ['shading', '渲染'], ['display', '显示样式'], ['annotation', '注释', true], ['views', '已保存方向'],
  ['viewMgr', '视图管理器'], ['grayCube', '透视图'], ['section', '截面'], ['datums', '基准显示'], ['notes', '注释显示'],
  ['spin', '旋转中心'], ['simDisplay', '仿真显示'],
];

export default function App() {
  return (
    <Page>
      <GlobalStyle />
      <TitleBar>
        <Brand>
          <Svg w={16} h={16}>{cube(1, 1, 14)}</Svg>
          <span>creo<sup>•</sup></span>
        </Brand>
        <WindowTitle>JC01 (启用的) - Creo Parametric</WindowTitle>
      </TitleBar>

      <MenuBar>
        <MenuTab $kind="file">文件</MenuTab>
        <MenuTab $kind="active">主页</MenuTab>
        {['精细化模型', '检查', '工具', '视图', '柔性建模'].map(t => <MenuTab key={t}>{t}</MenuTab>)}
        <MinimizeRibbon aria-label="最小化功能区">
          <Svg w={12} h={7}><path d="M0 7l6-7 6 7H8L6 5 4 7z" fill="#fff" /></Svg>
        </MinimizeRibbon>
      </MenuBar>

      <Ribbon>
        <Group $width={170}>
          <GroupBody $pad={3}>
            <Big icon="structure" label="结构模式" on />
            <Big icon="thermal" label="热模式" />
            <Big icon="model" label="模型设置" />
          </GroupBody>
          <GroupLabel>设置<Caret /></GroupLabel>
        </Group>
        <Group $width={120}>
          <GroupBody $pad={4} $gap={2}>
            <Big icon="regen" label="重新生成" menu />
            <Column items={[['copy', '复制'], ['paste', '粘贴']]} disabled />
          </GroupBody>
          <GroupLabel>操作<Caret /></GroupLabel>
        </Group>
        <Group $width={192}>
          <GroupBody $pad={3} $gap={6}>
            <Big icon="force" label="力/力矩" />
            <Column items={[['pressure', '压力'], ['bearing', '承载'], ['temperature', '温度']]} />
            <Column items={[['gravity', '重力'], ['centrifugal', '离心'], ['preload', '预加载荷']]} />
          </GroupBody>
          <GroupLabel>载荷<Caret /></GroupLabel>
        </Group>
        <Group $width={104}>
          <GroupBody $pad={4} $gap={4}>
            <Big icon="displacement" label="位移" />
            <Column items={[['planar', '平面'], ['pin', '销'], ['ball', '球']]} />
          </GroupBody>
          <GroupLabel>约束<Caret /></GroupLabel>
        </Group>
        <Group $width={86}>
          <GroupBody $pad={6}>
            <Column items={[['material', '材料'], ['assign', '材料分配'], ['orient', '材料方向']]} />
          </GroupBody>
          <GroupLabel>材料</GroupLabel>
        </Group>
        <Group $width={121}>
          <GroupBody $pad={4} $gap={2}>
            <Big icon="analysis" label="分析和研究" wrap />
            <Column items={[['measure', '测量'], ['result', '结果'], ['diagnose', '诊断']]} />
          </GroupBody>
          <GroupLabel>运行</GroupLabel>
        </Group>
        <Group $width={55}>
          <GroupBody $center><Big icon="exit" label="关闭" /></GroupBody>
          <GroupLabel>关闭</GroupLabel>
        </Group>
        <BirdBadge>
          <Svg w={54} h={60}>
            <defs>
              <linearGradient id="badge" x1="0" y1="0" x2="1" y2="1">
                <stop stopColor="#3f7ff0" /><stop offset=".5" stopColor="#5b90f0" /><stop offset="1" stopColor="#3a7cf2" />
              </linearGradient>
            </defs>
            <path d="M24 2q3-2 6 0l20 11q3 2 3 5v24q0 3-3 5L30 58q-3 2-6 0L4 47q-3-2-3-5V18q0-3 3-5z" fill="url(#badge)" />
            <path d="M25 4q2-1 4 0l19 11q3 2 3 4v22q0 3-3 4L29 56q-2 1-4 0L6 45q-3-1-3-4V19q0-2 3-4z" stroke="#b7d1fb" strokeWidth=".9" />
            <path d="M7 18q8 0 12 2 3 3 5 4 8-9 20-13-1 11-7 19 4 2 10 4-6 3-13 3-1 6 1 14-9-10-15-14-5-5-5-14-3-3-8-5z" fill="#f6faff" />
          </Svg>
        </BirdBadge>
      </Ribbon>

      <QuickBar>
        {art.newFile}{art.open}{art.save}{art.undo}<Caret color="#aaa" />{art.redo}<Caret color="#aaa" />
        {art.regenSmall}{art.closeWin}{art.windows}<Caret />
        <Rule />
        <Svg w={10} h={8}><path d="M1 .5h8" stroke="#444" /><path d="M1 3h8L5 8z" fill="#444" /></Svg>
      </QuickBar>

      <Workspace>
        <Sidebar>
          <SideTabs>
            <SideTab $on aria-label="模型树">{art.treeTab}</SideTab>
            <SideTab aria-label="文件夹浏览器">{art.folders}</SideTab>
          </SideTabs>
          <TreeTools>
            <Caret color="#aab0b2" />{art.greenCube}{art.dots}
            <ToggleTool aria-label="折叠">{art.collapse}</ToggleTool>
            {art.expand}
            <ToggleTool $on aria-label="树列">{art.columns}</ToggleTool>
            {art.chevrons}{art.docMenu}
          </TreeTools>
          <FilterRow>
            {art.funnel}
            <FilterBox><input aria-label="过滤" />{art.clear}</FilterBox>
            <Caret />
            <AddFilter aria-label="添加">{art.plus}</AddFilter>
          </FilterRow>
          <Tree>
            <TreeRow $root>{art.part}JC01.PRT</TreeRow>
            {rows(features)}
            <InsertHere><InsertLine /></InsertHere>
            {rows(simulation)}
          </Tree>
        </Sidebar>

        <Viewport>
          <ModelLayer><Bracket /></ModelLayer>
          <MeasureTag>Measure1</MeasureTag>
          <StatusCaption>
            <span>结构</span><span>:</span><b>3D</b><span>:</span><span>固有模式</span><span>:</span><span>默认</span><span>连接界面</span>
          </StatusCaption>
          <WcsBox>
            WCS
            <WcsAxis>X<Svg w={14} h={12}><path d="M-2 4l22 4" stroke="#85879a" strokeWidth="1.500" /></Svg></WcsAxis>
          </WcsBox>
          <ViewTools>
            {viewTools.map(([icon, name, on]) => <ViewTool key={name} $on={on} aria-label={name}>{art[icon]}</ViewTool>)}
          </ViewTools>

          <Dialog role="dialog" aria-label="测量">
            <DialogTitle>
              <h2>测量</h2>
              <button aria-label="关闭"><Svg w={9} h={9}><path d="M1 1l7 7M8 1L1 8" stroke="#66696c" strokeWidth="2.200" /></Svg></button>
            </DialogTitle>
            <DialogBody>
              <div>用户定义的</div>
              <ListArea>
                <MeasureList><MeasureItem>Measure1</MeasureItem></MeasureList>
                <Actions>
                  {['新建', '编辑', '复制', '删除'].map(t => <DialogButton key={t}>{t}</DialogButton>)}
                </Actions>
              </ListArea>
              <Description>
                <legend>说明</legend>
                <textarea readOnly aria-label="说明" />
              </Description>
              <DialogFooter>
                <label><input type="checkbox" />显示预定义的测量</label>
                <DialogButton $primary>关闭</DialogButton>
              </DialogFooter>
            </DialogBody>
          </Dialog>
          <Pointer>
            <Svg w={14} h={21}><path d="M1 1v17l4-4 3 6 2-1-2-6h5z" fill="#fff" stroke="#777" /></Svg>
          </Pointer>
        </Viewport>
      </Workspace>

      <StatusBar>
        <StatusTools>
          <ToggleTool $on aria-label="导航器">{art.panel}</ToggleTool>
          <ToggleTool aria-label="浏览器">{art.globe}</ToggleTool>
          <ToggleTool aria-label="全屏">{art.blank}</ToggleTool>
        </StatusTools>
        <StatusCell $width={81} $push>{art.hexagon}</StatusCell>
        <StatusCell $width={46}>{art.binoculars}<Caret /></StatusCell>
        <Filter aria-label="选择过滤器" defaultValue="all"><option value="all">所有可选择的</option></Filter>
      </StatusBar>
    </Page>
  );
}
